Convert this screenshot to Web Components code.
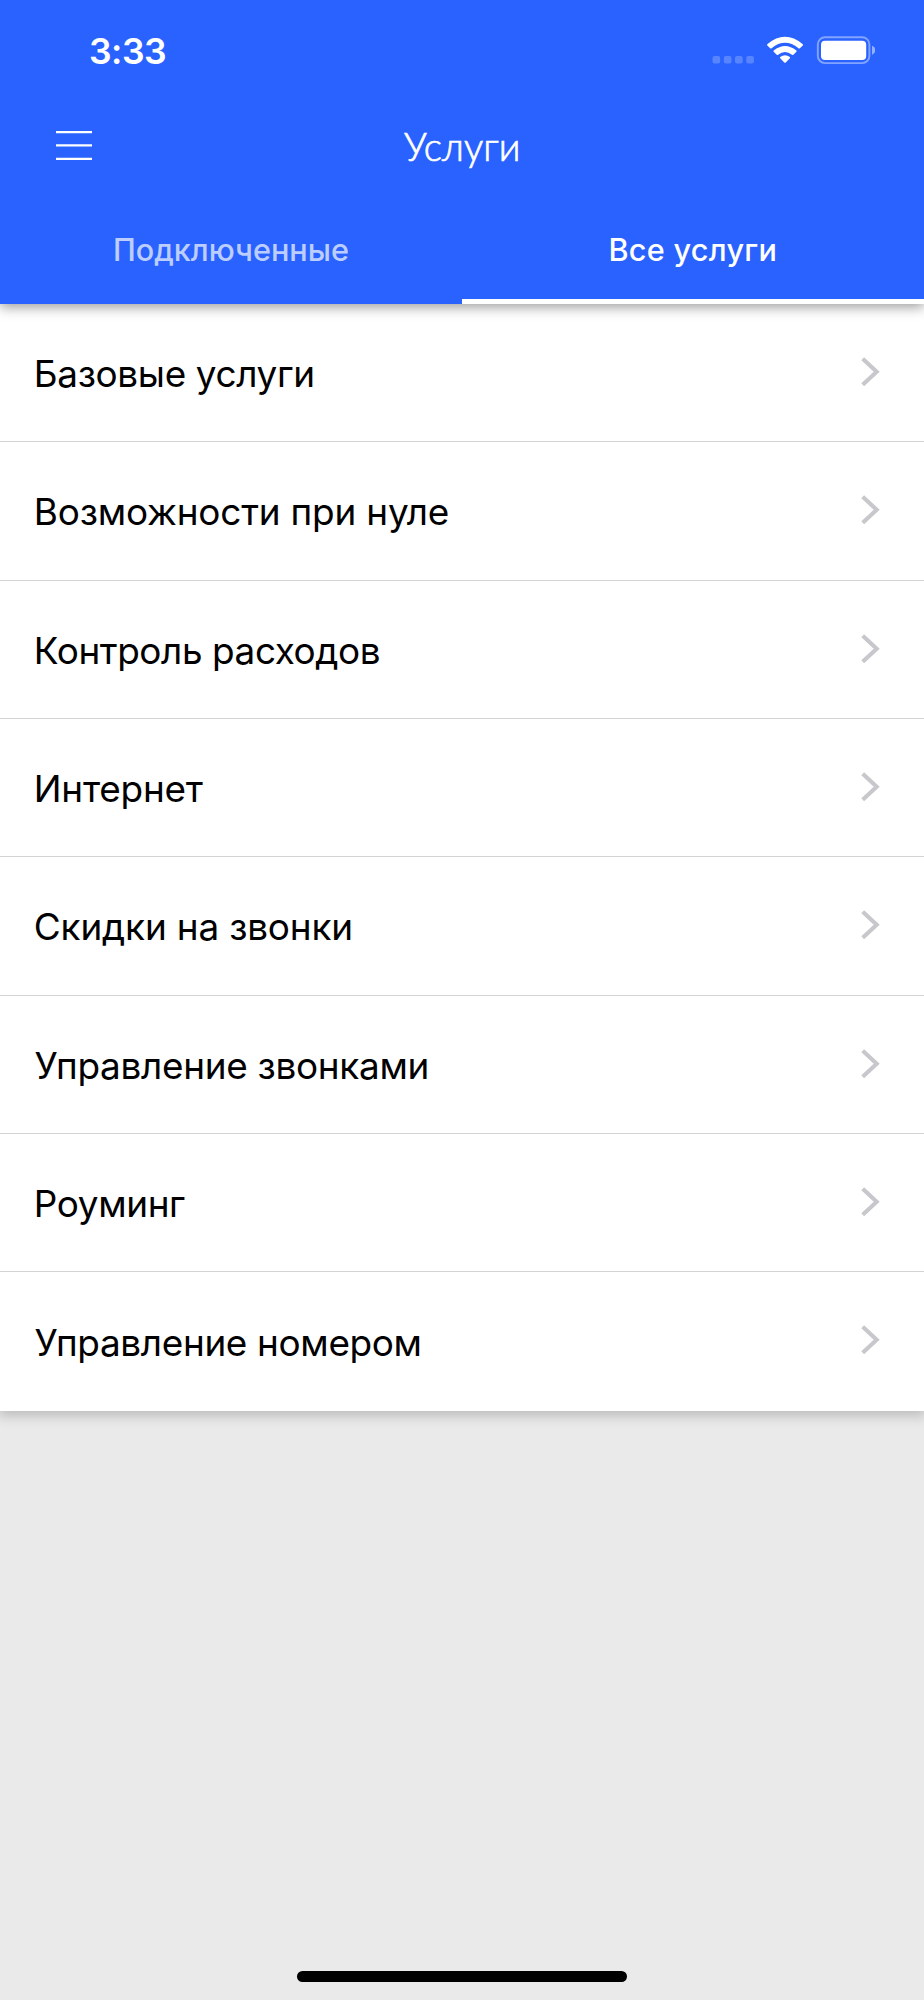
<!DOCTYPE html>
<html lang="ru"><head><meta charset="utf-8"><title>Услуги</title>
<style>html,body{margin:0;height:100%}body{font-family:Inter,"Liberation Sans",sans-serif}</style></head>
<body><services-screen></services-screen>
<script>
function define(name, html, ready) {
  const t = document.createElement('template');
  t.innerHTML = html;
  customElements.define(name, class extends HTMLElement {
    connectedCallback() {
      if (this.shadowRoot) return;
      this.attachShadow({ mode: 'open' }).append(t.content.cloneNode(true));
      if (ready) ready.call(this);
    }
  });
}

// A single line of text whose glyphs span `span` pixels; `shift` nudges its start.
define('fit-text', `<style>:host{display:block;white-space:pre;line-height:1}</style><slot></slot>`, function () {
  const s = getComputedStyle(this), c = document.createElement('canvas').getContext('2d');
  c.font = `${s.fontWeight} ${s.fontSize} ${s.fontFamily}`;
  const text = this.textContent, span = +this.getAttribute('span');
  this.style.width = span + 'px';
  const m = c.measureText(text);
  const ls = (span - m.actualBoundingBoxRight - m.actualBoundingBoxLeft) / (text.length - 1);
  this.style.letterSpacing = ls + 'px';
  this.style.textIndent = m.actualBoundingBoxLeft + (+this.getAttribute('shift') || 0) + 'px';
});

define('status-bar', `<style>
:host{display:flex;height:100px;box-sizing:border-box;padding:0 49px 0 90px;align-items:flex-start;color:#fff}
fit-text{font-size:35.6px;font-weight:560;padding-top:34px;margin-right:auto}
svg{display:block}
</style><fit-text span="75">3:33</fit-text>
<svg width="163" height="100" viewBox="712 0 163 100">
<g fill="#fff" fill-opacity=".22"><rect x="712.5" y="56" width="7.7" height="7.5" rx="2"/><rect x="723.8" y="56" width="7.7" height="7.5" rx="2"/><rect x="735" y="56" width="7.7" height="7.5" rx="2"/><rect x="746.2" y="56" width="7.7" height="7.5" rx="2"/></g>
<g fill="#fff"><path d="M767.3 44.2Q785 29.4 802.8 44.2Q803.4 44.8 802.8 45.4L799.9 48.2Q799.2 48.8 798.5 48.2Q785 37.3 771.6 48.2Q770.9 48.8 770.2 48.2L767.3 45.4Q766.7 44.8 767.3 44.2Z"/><path d="M773.7 50.6Q785 41.3 796.4 50.6Q797 51.2 796.4 51.8L793.4 54.7Q792.7 55.3 792 54.7Q785 49.5 778.1 54.7Q777.4 55.3 776.7 54.7L773.7 51.8Q773.1 51.2 773.7 50.6Z"/><path d="M780.2 57.1Q785 53.5 789.9 57.1Q790.5 57.7 789.9 58.3L785.8 62.4Q785 63.2 784.3 62.4L780.2 58.3Q779.6 57.7 780.2 57.1Z"/></g>
<rect x="817.8" y="37.3" width="51.6" height="25.8" rx="7.2" fill="none" stroke="#fff" stroke-opacity=".42" stroke-width="1.9"/>
<rect x="821" y="40.8" width="45.2" height="19.2" rx="4" fill="#fff"/>
<path d="M872 45.8Q875.4 47.2 875.4 50.2T872 54.8Z" fill="#fff" fill-opacity=".5"/>
</svg>`);

define('nav-bar', `<style>
:host{display:grid;grid-template-columns:1fr auto 1fr;height:100px;color:#fff;padding:0 56px;align-items:start;font:300 38.4px/1 Lato,Inter,sans-serif}
svg{display:block;margin-top:30px}
::slotted(fit-text){padding-top:27px;-webkit-text-stroke:.7px #fff}
</style><svg width="36" height="32" viewBox="0 0 36 32" fill="#fff"><path d="M0 1h36v2.3H0zM0 14.3h36v2.3H0zM0 27.7h36V30H0z"/></svg><slot></slot>`);

define('tab-item', `<style>
:host{display:flex;flex:1;justify-content:center;box-sizing:border-box;color:rgba(255,255,255,.7);font-size:30.6px;font-weight:480;padding-top:35px}
:host([active]){color:#fff;border-bottom:5px solid #fff}
</style><slot></slot>`);

define('app-header', `<style>
:host{display:flex;flex-direction:column;height:304px;background:#2962ff;box-shadow:0 3px 12px rgba(0,0,0,.4);position:relative;z-index:1}
nav{display:flex;flex:1}
</style><status-bar></status-bar><slot></slot><nav><slot name="tab"></slot></nav>`);

define('service-row', `<style>
:host{display:flex;height:138.35px;box-sizing:border-box;padding:0 44px 0 35.8px;justify-content:space-between;border-bottom:1px solid #d4d4d4;font-size:36.9px;color:#000}
:host(:last-child){border-bottom:0}
.t{padding-top:52.1px}
svg{display:block;margin-top:52px}
</style><div class="t"><slot></slot></div><svg width="19" height="32" viewBox="0 0 19 32" fill="none" stroke="#c7c7cc" stroke-width="4.1"><path d="M1.7 2.8L15.7 15.8L1.7 28.8"/></svg>`);

define('service-list', `<style>:host{display:block;background:#fff;box-shadow:0 3px 12px 2px rgba(0,0,0,.2)}</style><slot></slot>`);

define('services-screen', `<style>
:host{display:flex;flex-direction:column;height:2000px;width:924px;overflow:hidden;background:#eaeaea}
.home{width:330px;height:11px;border-radius:6px;background:#000;margin:auto auto 18px}
</style>
<app-header><nav-bar><fit-text shift="-1.2" span="114">Услуги</fit-text></nav-bar>
<tab-item slot="tab"><fit-text shift=".5" span="233">Подключенные</fit-text></tab-item>
<tab-item slot="tab" active><fit-text span="165">Все услуги</fit-text></tab-item></app-header>
<service-list>
<service-row><fit-text shift="1" span="275.5">Базовые услуги</fit-text></service-row>
<service-row><fit-text shift="1" span="411">Возможности при нуле</fit-text></service-row>
<service-row><fit-text shift="1" span="342">Контроль расходов</fit-text></service-row>
<service-row><fit-text shift="1" span="166">Интернет</fit-text></service-row>
<service-row><fit-text span="314.5">Скидки на звонки</fit-text></service-row>
<service-row><fit-text shift="-1.2" span="392">Управление звонками</fit-text></service-row>
<service-row><fit-text shift="1" span="148.3">Роуминг</fit-text></service-row>
<service-row><fit-text shift="-1.2" span="385">Управление номером</fit-text></service-row>
</service-list>
<div class="home"></div>`);
</script></body></html>
